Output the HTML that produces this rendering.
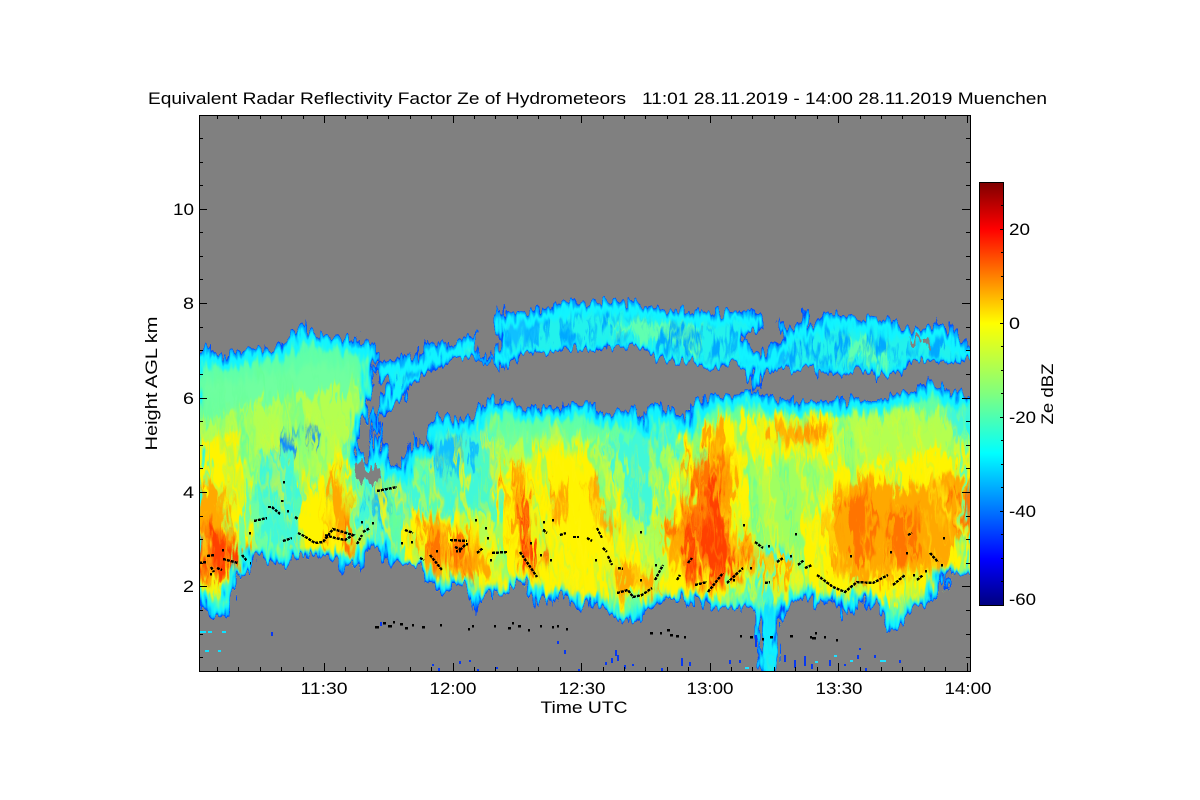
<!DOCTYPE html>
<html><head><meta charset="utf-8"><title>Radar Reflectivity</title>
<style>html,body{margin:0;padding:0;background:#fff;width:1200px;height:800px;overflow:hidden}#w{width:1200px;height:800px;overflow:hidden}svg{display:block;overflow:hidden}text{font-family:"Liberation Sans",sans-serif;font-size:17px;fill:#000}</style></head>
<body>
<div id="w">
<svg xmlns="http://www.w3.org/2000/svg" width="1200" height="800" viewBox="0 0 1200 800" shape-rendering="crispEdges">
<defs>
<linearGradient id="jet" x1="0" y1="1" x2="0" y2="0">
<stop offset="0" stop-color="#00007f"/><stop offset=".11" stop-color="#0000ff"/><stop offset=".36" stop-color="#00ffff"/><stop offset=".5" stop-color="#7fff7f"/><stop offset=".667" stop-color="#ffff00"/><stop offset=".89" stop-color="#ff0000"/><stop offset="1" stop-color="#7f0000"/>
</linearGradient>
<linearGradient id="fade" gradientUnits="userSpaceOnUse" x1="0" y1="395" x2="0" y2="450"><stop offset="0" stop-color="#000"/><stop offset="1" stop-color="#fff"/></linearGradient>
<mask id="mk" maskUnits="userSpaceOnUse" x="190" y="290" width="790" height="390"><rect x="190" y="290" width="790" height="390" fill="url(#fade)"/></mask>
<path id="lc" d="M190,351L199,351 205,349 216,352 222,355 240,351 245,348 265,348 280,343 292,340 293,330 303,323 312,333 325,337 340,337 352,340 358,333 362,342 370,345 380,352 378,360 373,377 372,395 362,425 358,440 360,450 366,460 372,445 380,425 382,438 393,465 402,470 405,455 412,437 420,445 428,445 428,432 430,425 437,417 447,415 460,420 470,420 475,413 487,398 500,400 510,402 523,408 540,405 557,407 575,403 593,402 597,412 613,413 640,407 641,423 653,402 680,412 687,423 693,403 707,397 733,393 757,388 770,397 787,400 813,402 833,400 857,398 873,403 893,393 913,390 927,377 933,385 947,383 950,393 980,397 980,572 950,575 945,590 942,573 933,602 913,607 900,628 888,632 880,610 863,598 847,618 833,600 813,605 807,595 790,607 780,620 778,630 779,680 760,680 758,623 753,613 740,607 713,610 697,598 690,605 670,598 647,610 638,623 622,620 607,613 590,600 575,613 562,592 552,607 547,595 537,608 523,583 500,592 483,597 475,612 467,595 460,582 443,592 423,577 413,568 397,568 387,560 377,547 367,553 360,572 353,565 343,572 337,560 330,557 300,555 290,565 277,567 267,560 253,553 248,577 240,572 233,598 225,618 213,618 200,600 190,590Z"/>
<path id="uc" d="M497,310L513,313 540,310 552,306 563,300 580,303 613,300 647,305 667,310 707,312 755,310 763,317 762,327 757,333 750,332 743,342 763,355 780,337 782,320 793,330 803,310 812,313 810,325 823,312 857,320 883,320 913,330 940,322 957,333 967,347 980,345 980,360 947,362 913,363 900,373 877,377 863,370 840,375 813,372 793,370 780,365 767,373 753,388 747,373 737,365 713,368 687,362 663,362 640,347 607,347 597,352 580,348 557,352 523,353 500,372 495,363 478,360 457,358 440,365 423,378 408,393 403,403 392,407 380,420 372,440 366,445 374,415 382,395 390,380 378,378 376,366 385,358 395,362 403,355 412,350 415,357 425,352 428,340 440,347 457,340 477,333 478,353 492,357 497,345Z"/>
<g id="all"><use href="#lc"/><use href="#uc"/></g>
<clipPath id="plot"><rect x="200" y="116" width="770" height="555"/></clipPath>
<clipPath id="cl"><use href="#lc"/></clipPath>
<clipPath id="cu"><use href="#uc"/></clipPath>
<filter id="jag" filterUnits="userSpaceOnUse" x="190" y="290" width="790" height="390" color-interpolation-filters="sRGB">
<feTurbulence type="fractalNoise" baseFrequency="0.2 0.045" numOctaves="2" seed="4" result="n"/>
<feDisplacementMap in="SourceGraphic" in2="n" scale="22" xChannelSelector="R" yChannelSelector="G"/>
</filter>
<filter id="st" filterUnits="userSpaceOnUse" x="190" y="290" width="790" height="390" color-interpolation-filters="sRGB">
<feGaussianBlur stdDeviation="2.5" result="b"/>
<feTurbulence type="fractalNoise" baseFrequency="0.12 0.012" numOctaves="3" seed="9" result="n"/>
<feDisplacementMap in="b" in2="n" scale="42" xChannelSelector="R" yChannelSelector="G"/>
</filter>
<filter id="sy" filterUnits="userSpaceOnUse" x="170" y="250" width="830" height="465" color-interpolation-filters="sRGB">
<feTurbulence type="fractalNoise" baseFrequency="0.11 0.008" numOctaves="3" seed="21"/>
<feColorMatrix values="0 0 0 0 1  0 0 0 0 .96  0 0 0 0 .05  2.6 0 0 0 -1.3"/>
</filter>
<filter id="sg" filterUnits="userSpaceOnUse" x="170" y="250" width="830" height="465" color-interpolation-filters="sRGB">
<feTurbulence type="fractalNoise" baseFrequency="0.09 0.007" numOctaves="3" seed="33"/>
<feColorMatrix values="0 0 0 0 .4  0 0 0 0 1  0 0 0 0 .6  3 0 0 0 -1.5"/>
</filter>
<filter id="sb" filterUnits="userSpaceOnUse" x="400" y="280" width="600" height="120" color-interpolation-filters="sRGB">
<feTurbulence type="fractalNoise" baseFrequency="0.1 0.025" numOctaves="3" seed="12"/>
<feColorMatrix values="0 0 0 0 0  0 0 0 0 .66  0 0 0 0 1  4.5 0 0 0 -2.1"/>
</filter>
<filter id="b0" filterUnits="userSpaceOnUse" x="190" y="290" width="790" height="390" color-interpolation-filters="sRGB"><feMorphology in="SourceAlpha" operator="erode" radius="16"/><feOffset dy="9"/><feGaussianBlur stdDeviation="4" result="e"/><feFlood flood-color="#60ffa8"/><feComposite in2="SourceAlpha" operator="in" result="f"/><feComposite in="f" in2="e" operator="out"/></filter>
<filter id="b1" filterUnits="userSpaceOnUse" x="190" y="290" width="790" height="390" color-interpolation-filters="sRGB"><feMorphology in="SourceAlpha" operator="erode" radius="8"/><feOffset dy="4"/><feGaussianBlur stdDeviation="2.5" result="e"/><feFlood flood-color="#10f4ff"/><feComposite in2="SourceAlpha" operator="in" result="f"/><feComposite in="f" in2="e" operator="out"/></filter>
<filter id="b2" filterUnits="userSpaceOnUse" x="190" y="290" width="790" height="390" color-interpolation-filters="sRGB"><feMorphology in="SourceAlpha" operator="erode" radius="3"/><feOffset dy="1"/><feGaussianBlur stdDeviation="1.2" result="e"/><feFlood flood-color="#00a8ff"/><feComposite in2="SourceAlpha" operator="in" result="f"/><feComposite in="f" in2="e" operator="out"/></filter>
<filter id="b3" filterUnits="userSpaceOnUse" x="190" y="290" width="790" height="390" color-interpolation-filters="sRGB"><feMorphology in="SourceAlpha" operator="erode" radius="1"/><feGaussianBlur stdDeviation=".5" result="e"/><feFlood flood-color="#0048ff"/><feComposite in2="SourceAlpha" operator="in" result="f"/><feComposite in="f" in2="e" operator="out"/></filter>
</defs>

<rect width="1200" height="800" fill="#fff"/>
<rect x="199" y="115" width="771" height="556" fill="#808080"/>

<g clip-path="url(#plot)">
<g filter="url(#jag)">
<use href="#lc" fill="#70ffa0"/>
<use href="#uc" fill="#22f2ec"/>
<use href="#lc" filter="url(#b0)" fill="#000"/>
<g clip-path="url(#cl)">
<g filter="url(#st)" shape-rendering="auto">
<g fill="#b4ff50">
<path d="M199,420L300,395 372,385 368,400 345,470 300,470 270,470 240,510 199,490Z"/>
<path d="M470,445L650,435 690,440 720,415 840,415 900,410 970,420 970,590 480,600Z"/>
<path d="M410,510L470,500 500,600 405,580Z"/>
</g>
<g fill="#40f8d8">
<path d="M258,455L292,450 318,525 300,548 256,540Z"/>
<path d="M432,425L490,420 505,520 470,510 425,510Z"/>
<path d="M355,440L395,450 425,520 400,565 378,550 360,510Z"/>
<path d="M610,440L650,425 680,430 675,510 645,530 625,500Z"/>
<path d="M758,480L775,470 782,545 770,620 750,600 760,560Z"/>
<path d="M945,405L970,405 970,440 950,430Z"/>
</g>
<g fill="#10c0ff">
<path d="M368,487L386,485 388,512 368,512Z"/>
<path d="M282,450L305,424 312,430 295,455Z" fill="#1088ff"/>
<path d="M435,440L470,435 465,470 440,480Z"/>
</g>
<g fill="#a0ff60">
<path d="M660,455L690,450 690,540 655,540Z"/>
<path d="M795,460L830,455 815,555 790,540Z"/>
<path d="M740,470L800,465 795,550 745,540Z"/>
</g>
<g fill="#fff400">
<path d="M199,445L240,430 250,500 240,560 250,585 199,600Z"/>
<path d="M312,470L345,458 362,540 372,556 300,556 298,520Z"/>
<path d="M405,515L455,510 495,545 505,592 440,592 410,570Z"/>
<path d="M495,480L530,450 595,445 605,480 650,560 655,600 590,602 520,590 500,540Z"/>
<path d="M660,510L700,420 745,425 745,590 665,600Z"/>
<path d="M725,418L835,415 830,460 790,460 740,470Z"/>
<path d="M810,520L835,470 970,450 970,565 935,600 820,600 800,580Z"/>
<path d="M762,560L790,550 790,600 775,610Z"/>
</g>
</g>
<g transform="rotate(-12 585 500)" shape-rendering="auto">
<rect x="170" y="250" width="830" height="465" filter="url(#sg)"/>
</g>
<g filter="url(#st)" shape-rendering="auto">
<g fill="#ffa800">
<path d="M199,480L222,490 232,540 240,575 199,585Z"/>
<path d="M325,480L340,475 358,545 345,553 328,530Z"/>
<path d="M420,515L445,518 480,545 490,570 440,578 420,552Z"/>
<path d="M512,460L524,465 548,575 528,575 510,500Z"/>
<path d="M548,490L558,485 570,520 555,525Z"/>
<path d="M585,480L598,485 608,530 592,530Z"/>
<path d="M615,560L640,565 658,590 625,594 617,585Z"/>
<path d="M662,535L692,495 704,425 720,425 730,490 750,560 725,585 690,588 668,558Z"/>
<path d="M768,558L780,555 782,585 772,592Z"/>
<path d="M765,428L822,424 826,442 772,446Z"/>
<path d="M840,495L868,475 885,480 898,490 960,475 970,480 970,535 955,540 945,565 900,580 845,578 822,525Z"/>
</g>
<g fill="#ff7400">
<path d="M199,520L222,530 238,552 240,575 205,580 199,575Z"/>
<path d="M336,515L346,520 354,548 340,550Z"/>
<path d="M428,528L448,530 470,552 466,568 440,562 428,548Z"/>
<path d="M845,505L866,490 876,555 858,562 848,540Z"/>
<path d="M892,510L914,505 916,565 896,570Z"/>
<path d="M950,490L970,495 970,525 954,525Z"/>
<path d="M802,426L826,426 824,438 806,440Z" fill="#ff9800"/>
<path d="M672,530L695,510 700,450 715,455 724,505 742,555 722,580 694,582Z"/>
</g>
<g fill="#ff4000">
<path d="M199,532L220,538 234,556 236,570 205,572 199,568Z"/>
<path d="M516,480L525,486 543,565 535,574 522,530Z"/>
<path d="M680,540L698,525 706,480 716,490 724,525 740,558 720,576 698,578 692,560Z"/>
</g>
<path d="M745,610L790,610 790,680 745,680Z" fill="#10e0ff"/>
</g>
<g mask="url(#mk)"><g transform="rotate(-12 585 500)" shape-rendering="auto">
<rect x="170" y="250" width="830" height="465" filter="url(#sy)"/>
</g></g>
</g>
<g clip-path="url(#cu)">
<g filter="url(#st)" shape-rendering="auto">
<path d="M600,322L700,324 702,345 640,340Z" fill="#60ffb0"/>
<path d="M445,346L478,340 480,354 445,362Z" fill="#80ff90"/>
<path d="M840,340L880,340 885,360 845,360Z" fill="#60ffb0"/>
<path d="M745,345L800,345 790,368 750,370Z" fill="#10b0ff"/>
<path d="M500,318L540,318 535,340 505,345Z" fill="#10c0ff"/>
</g>
<rect x="400" y="280" width="600" height="120" filter="url(#sb)" shape-rendering="auto"/>
</g>
<use href="#all" filter="url(#b1)" fill="#000"/>
<use href="#all" filter="url(#b2)" fill="#000"/>
<use href="#all" filter="url(#b3)" fill="#000"/>
<path d="M356,464L364,462 368,472 376,464 379,481 358,481 354,475Z" fill="#808080"/>
<path d="M640,414L650,406 655,398 646,400Z" fill="#808080"/>
<path d="M910,338h10v4h-10zM925,340h8v6h-8z" fill="#808080"/>
</g>

<path d="M200,632h6M208,632h4M222,632h4M205,651h4M218,651h3" stroke="#10e0ff" stroke-width="2" fill="none"/>
<path d="M381,622v4M433,664v2M439,668v3M460,661v3M470,660v2M478,669v2M497,667v2M558,641v3M565,650v4M579,669v2M606,662v3M612,658v5M616,650v6M618,655v6M625,665v4M633,664v2M662,668v3M682,658v8M690,662v4M730,660v4M740,660v3M785,655v7M795,660v8M805,656v10M812,664v5M830,660v6M845,664v2M858,655v4M866,668v3M875,655v3M900,660v3M272,632v4M756,635v12M860,648v2" stroke="#0838f0" stroke-width="2" fill="none"/>
<path d="M745,668h4M815,662h3M834,656h3M850,661h3M880,661h6" stroke="#20e0ff" stroke-width="2" fill="none"/>

<g fill="none" stroke="#000" stroke-width="2.4" stroke-dasharray="3 1">
<path d="M199,563L207,562M207,556L215,555M223,559L238,563M242,555L247,561M217,568L222,570M211,567L214,572"/>
<path d="M254,521L267,518M268,507L272,507 280,514M295,517L298,519"/>
<path d="M283,541L292,538M298,533L304,536 315,543 323,542 333,529 353,535 345,540 335,538 325,535"/>
<path d="M357,544L362,535M363,532L370,528M377,491L397,487"/>
<path d="M405,530L413,533M420,558L424,560M430,555L442,570M450,540L467,541M455,547L462,550M465,545L460,550"/>
<path d="M477,553L483,548M492,553L507,552M520,552L537,577M543,530L547,533M560,535L566,533M573,537L579,537M587,538L592,541"/>
<path d="M597,528L602,538M603,548L607,552M608,556L612,565M618,568L623,569M617,593L628,590 633,597 642,595 652,588M655,580L663,565"/>
<path d="M677,580L680,575M688,563L692,558M695,585L707,582M708,592L723,573M727,583L743,568"/>
<path d="M755,542L763,548M765,583L770,582M777,562L783,558M798,565L804,560M805,568L812,565M817,575L833,587 845,592 857,582 873,583 888,575M893,585L905,575M917,580L923,575M908,535L912,533M930,553L938,562"/>
</g>
<g fill="none" stroke="#000" stroke-width="2.5">
<path d="M283,482h2M282,500v2M287,511h2M249,533h2M222,550h2M250,563h1M210,574h2M361,522h2M372,523h2M401,543h2M411,542h2M436,551h2M456,551h2M459,551h2M466,544h2M475,520h2M485,528h2M487,538h2M490,560h2M530,543h2M540,555h2M550,560h2M543,522h2M552,520h2M543,530h2M595,560h2M640,580h2M640,532h2M655,565h2M733,580h2M743,525h2M768,546h2M795,534h2M750,568h2M790,556h2M850,556h2M890,552h2M906,553h2M925,571h2M941,565h2M943,538h2M913,575h2"/>
<path d="M375,627h4M383,623h3M388,626h4M393,622h2M400,624h3M405,628h3M412,625h2M422,627h3M440,625h2M468,629h2M472,626h2M494,626h2M508,628h3M512,623h2M518,626h3M528,630h2M540,626h2M552,627h2M557,626h2M566,629h2"/>
<path d="M650,633h3M660,633h2M667,630h3M670,635h3M676,636h3M684,637h2M740,636h2M750,637h3M762,639h2M770,637h3M790,636h3M810,637h2M815,633h2M812,638h4M824,637h2M836,640h2"/>
</g>
</g>

<g fill="none" stroke="#000" stroke-width="1">
<rect x="199.5" y="115.5" width="771" height="556"/>
<path d="M199,138.5h4M199,162.5h4M199,185.5h4M199,209.5h8M199,232.5h4M199,256.5h4M199,279.5h4M199,303.5h8M199,327.5h4M199,350.5h4M199,374.5h4M199,398.5h8M199,421.5h4M199,445.5h4M199,468.5h4M199,492.5h8M199,516.5h4M199,539.5h4M199,563.5h4M199,586.5h8M199,610.5h4M199,634.5h4M199,657.5h4"/>
<path d="M970,138.5h-4M970,162.5h-4M970,185.5h-4M970,209.5h-8M970,232.5h-4M970,256.5h-4M970,279.5h-4M970,303.5h-8M970,327.5h-4M970,350.5h-4M970,374.5h-4M970,398.5h-8M970,421.5h-4M970,445.5h-4M970,468.5h-4M970,492.5h-8M970,516.5h-4M970,539.5h-4M970,563.5h-4M970,586.5h-8M970,610.5h-4M970,634.5h-4M970,657.5h-4"/>
<path d="M217.5,115v4M238.5,115v4M260.5,115v4M281.5,115v4M303.5,115v4M324.5,115v8M345.5,115v4M367.5,115v4M388.5,115v4M410.5,115v4M431.5,115v4M453.5,115v8M474.5,115v4M495.5,115v4M517.5,115v4M538.5,115v4M560.5,115v4M581.5,115v8M603.5,115v4M624.5,115v4M645.5,115v4M667.5,115v4M688.5,115v4M710.5,115v8M731.5,115v4M752.5,115v4M774.5,115v4M795.5,115v4M817.5,115v4M838.5,115v8M860.5,115v4M881.5,115v4M902.5,115v4M924.5,115v4M945.5,115v4M967.5,115v8"/>
<path d="M217.5,671v-4M238.5,671v-4M260.5,671v-4M281.5,671v-4M303.5,671v-4M324.5,671v-8M345.5,671v-4M367.5,671v-4M388.5,671v-4M410.5,671v-4M431.5,671v-4M453.5,671v-8M474.5,671v-4M495.5,671v-4M517.5,671v-4M538.5,671v-4M560.5,671v-4M581.5,671v-8M603.5,671v-4M624.5,671v-4M645.5,671v-4M667.5,671v-4M688.5,671v-4M710.5,671v-8M731.5,671v-4M752.5,671v-4M774.5,671v-4M795.5,671v-4M817.5,671v-4M838.5,671v-8M860.5,671v-4M881.5,671v-4M902.5,671v-4M924.5,671v-4M945.5,671v-4M967.5,671v-8"/>
</g>

<rect x="979.5" y="182.5" width="24" height="423" fill="url(#jet)" stroke="#000" stroke-width="1"/>
<path d="M1003,205.5h-2M1003,229.5h-3M1003,252.5h-2M1003,276.5h-2M1003,299.5h-2M1003,323.5h-3M1003,346.5h-2M1003,370.5h-2M1003,393.5h-2M1003,417.5h-3M1003,440.5h-2M1003,464.5h-2M1003,487.5h-2M1003,511.5h-3M1003,534.5h-2M1003,558.5h-2M1003,581.5h-2" stroke="#000" fill="none"/>

<g shape-rendering="auto">
<text x="148" y="104" textLength="899" lengthAdjust="spacingAndGlyphs" xml:space="preserve">Equivalent Radar Reflectivity Factor Ze of Hydrometeors   11:01 28.11.2019 - 14:00 28.11.2019 Muenchen</text>
<g text-anchor="end">
<text x="194" y="215" textLength="21" lengthAdjust="spacingAndGlyphs">10</text><text x="194" y="309" textLength="11" lengthAdjust="spacingAndGlyphs">8</text><text x="194" y="404" textLength="11" lengthAdjust="spacingAndGlyphs">6</text><text x="194" y="498" textLength="11" lengthAdjust="spacingAndGlyphs">4</text><text x="194" y="592" textLength="11" lengthAdjust="spacingAndGlyphs">2</text>
</g>
<g text-anchor="middle">
<text x="324" y="694" textLength="47" lengthAdjust="spacingAndGlyphs">11:30</text><text x="453" y="694" textLength="47" lengthAdjust="spacingAndGlyphs">12:00</text><text x="582" y="694" textLength="47" lengthAdjust="spacingAndGlyphs">12:30</text><text x="710" y="694" textLength="47" lengthAdjust="spacingAndGlyphs">13:00</text><text x="839" y="694" textLength="47" lengthAdjust="spacingAndGlyphs">13:30</text><text x="968" y="694" textLength="47" lengthAdjust="spacingAndGlyphs">14:00</text>
<text x="584" y="713" textLength="87" lengthAdjust="spacingAndGlyphs">Time UTC</text>
<text transform="translate(157,383.5) rotate(-90)" textLength="134" lengthAdjust="spacingAndGlyphs">Height AGL km</text>
<text transform="translate(1053,394) rotate(-90)" textLength="61" lengthAdjust="spacingAndGlyphs">Ze dBZ</text>
</g>
<text x="1009" y="235" textLength="21" lengthAdjust="spacingAndGlyphs">20</text><text x="1009" y="329" textLength="11" lengthAdjust="spacingAndGlyphs">0</text><text x="1009" y="423" textLength="27" lengthAdjust="spacingAndGlyphs">-20</text><text x="1009" y="517" textLength="27" lengthAdjust="spacingAndGlyphs">-40</text><text x="1009" y="605" textLength="27" lengthAdjust="spacingAndGlyphs">-60</text>
</g>
</svg>
</div>
</body></html>
